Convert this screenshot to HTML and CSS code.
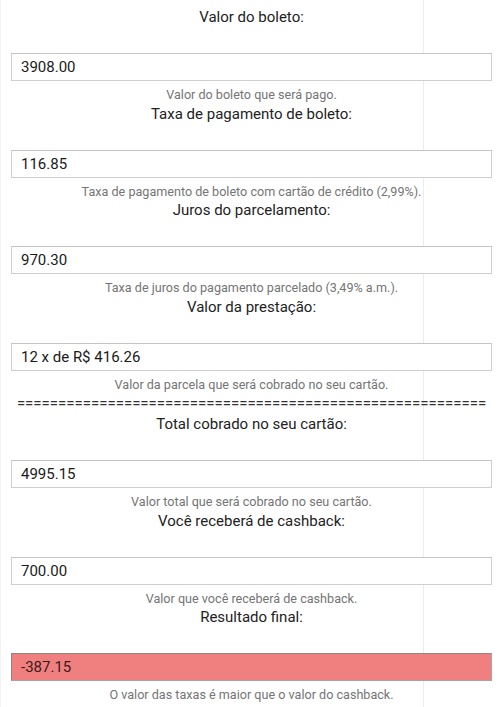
FILE: index.html
```html
<!DOCTYPE html>
<html lang="pt-BR">
<head>
<meta charset="utf-8">
<title>Calculadora de boleto com cashback</title>
<link rel="stylesheet" href="styles.css">
</head>
<body>
<div class="page">
  <form class="calc">
    <div class="field">
      <label class="label" for="valor">Valor do boleto:</label>
      <input class="input" id="valor" type="text" value="3908.00">
      <small class="hint">Valor do boleto que será pago.</small>
    </div>
    <div class="field">
      <label class="label" for="taxa">Taxa de pagamento de boleto:</label>
      <input class="input" id="taxa" type="text" value="116.85">
      <small class="hint">Taxa de pagamento de boleto com cartão de crédito (2,99%).</small>
    </div>
    <div class="field">
      <label class="label" for="juros">Juros do parcelamento:</label>
      <input class="input" id="juros" type="text" value="970.30">
      <small class="hint">Taxa de juros do pagamento parcelado (3,49% a.m.).</small>
    </div>
    <div class="field">
      <label class="label" for="prestacao">Valor da prestação:</label>
      <input class="input" id="prestacao" type="text" value="12 x de R$ 416.26">
      <small class="hint">Valor da parcela que será cobrado no seu cartão.</small>
    </div>
    <div class="divider">=========================================================</div>
    <div class="field">
      <label class="label" for="total">Total cobrado no seu cartão:</label>
      <input class="input" id="total" type="text" value="4995.15">
      <small class="hint">Valor total que será cobrado no seu cartão.</small>
    </div>
    <div class="field">
      <label class="label" for="cashback">Você receberá de cashback:</label>
      <input class="input" id="cashback" type="text" value="700.00">
      <small class="hint">Valor que você receberá de cashback.</small>
    </div>
    <div class="field">
      <label class="label" for="resultado">Resultado final:</label>
      <input class="input input-negative" id="resultado" type="text" value="-387.15">
      <small class="hint">O valor das taxas é maior que o valor do cashback.</small>
    </div>
  </form>
</div>
</body>
</html>
```

FILE: styles.css
```css
html, body {
  margin: 0;
  padding: 0;
  background: #ffffff;
}

body {
  font-family: Roboto, "Noto Sans", Arial, sans-serif;
  color: #212121;
}

/* faint column guides behind the form */
.page {
  min-height: 707px;
  box-sizing: border-box;
  padding: 7px 8px 0 11px;
  background:
    linear-gradient(#ececec, #ececec) 423px 0 / 1px 100% no-repeat,
    linear-gradient(#f2f2f2, #f2f2f2) 0 0 / 1px 100% no-repeat,
    #ffffff;
}

.calc {
  display: flex;
  flex-direction: column;
}

.field {
  display: flex;
  flex-direction: column;
  align-items: center;
}

.label {
  font-size: 15px;
  line-height: 20px;
  height: 20px;
  color: #222222;
  margin-bottom: 26px;
}

.input {
  box-sizing: border-box;
  width: 100%;
  height: 28px;
  margin: 0;
  padding: 0 9px;
  font-family: Roboto, "Noto Sans", Arial, sans-serif;
  font-size: 15px;
  color: #1a1a1a;
  background: #ffffff;
  border: 1px solid #cfcfcf;
  border-top-color: #c4c4c4;
  border-radius: 0;
  outline: none;
}

.input-negative {
  background: #f07f7f;
  color: #3b1a1a;
  border: 1px solid #b0a0a0;
  border-top-color: #8e8585;
  border-left-color: #8e8585;
}

.hint {
  font-size: 12.6px;
  line-height: 15.5px;
  color: #757575;
  margin-top: 6px;
  margin-bottom: 1px;
}

.divider {
  text-align: center;
  font-size: 15px;
  line-height: 21px;
  height: 21px;
  color: #333333;
  white-space: nowrap;
  overflow: hidden;
}
```
